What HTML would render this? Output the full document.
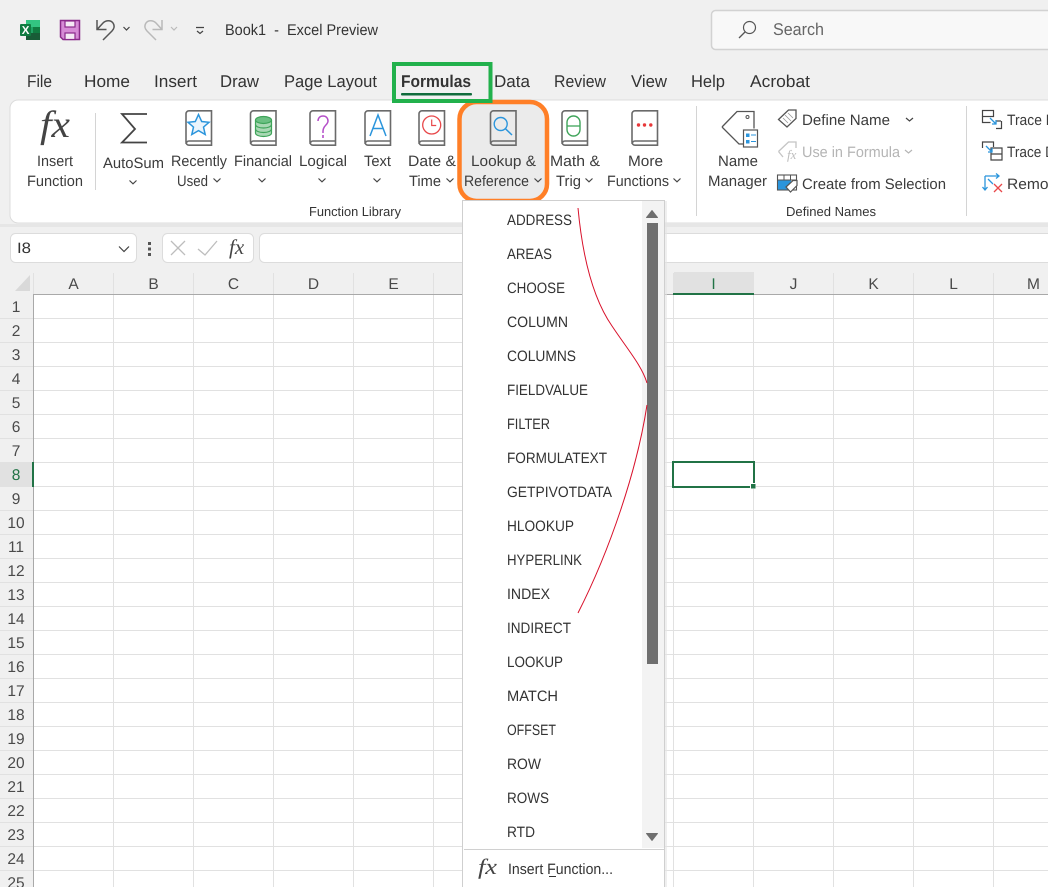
<!DOCTYPE html>
<html lang="en"><head><meta charset="utf-8"><title>Excel Preview</title>
<style>
html,body{margin:0;padding:0;background:#f0f0f0;width:1048px;height:887px;overflow:hidden}
svg{display:block}
text{font-family:"Liberation Sans",sans-serif;fill:#3a3a3a;font-size:15px;text-rendering:geometricPrecision}
.t{font-size:17px;fill:#333}
.m{font-size:15px;fill:#3c3c3c}
.g{font-size:13px;fill:#333}
.h{font-size:15.5px;fill:#4a4a4a;text-anchor:middle}
.i{font-size:15px;fill:#333}
.fx{font-family:"Liberation Serif",serif;font-style:italic;fill:#444}
.b{fill:none;stroke:#6a6a6a;stroke-width:1.6}
.c{fill:none;stroke:#444;stroke-width:1.2}
</style></head><body>
<svg width="1048" height="887" viewBox="0 0 1048 887" xmlns="http://www.w3.org/2000/svg">
<defs>
<symbol id="book" viewBox="0 0 28 36" width="28" height="36">
<path class="b" d="M4 .8h22.500v34.400H4a3 3 0 0 1-3-3V3.800a3 3 0 0 1 3-3zM1 34a3 3 0 0 1 3-3h22.500"/>
</symbol>
<path id="chev" class="c" d="M-3.500-1.500 0 1.800 3.500-1.500"/>
</defs>
<rect width="1048" height="887" fill="#f0f0f0"/>

<!-- title bar -->
<path d="M26 20h14v20H26z" fill="#185c37"/><path d="M26 20h14v7H26z" fill="#33c481"/><path d="M33 27h7v6h-7z" fill="#107c41"/><path d="M26 27h7v6h-7z" fill="#21a366"/>
<rect x="20" y="24" width="11" height="12" rx="1" fill="#107c41"/>
<text x="21.800" y="34" style="font-size:11.500px;font-weight:bold;fill:#fff">X</text>
<path d="M60.500 20.500h19v19H63l-2.500-2.500z" fill="#d68bd6" stroke="#8a2a8a" stroke-width="1.500"/>
<rect x="65" y="21" width="10" height="6" fill="#f5e9f5" stroke="#8a2a8a" stroke-width="1.200"/>
<rect x="65" y="33" width="10" height="6.500" fill="#f5e9f5" stroke="#8a2a8a" stroke-width="1.200"/>
<path d="M97 20v9.500h9.500M97.500 29L103 23c3-3 8-3 10 0c2 3 1 6-1 8l-9 9" fill="none" stroke="#555" stroke-width="1.500"/>
<path class="c" d="M123.500 27l3 3 3-3"/>
<path d="M162 20v9.500h-9.500M161.500 29L156 23c-3-3-8-3-10 0c-2 3-1 6 1 8l9 9" fill="none" stroke="#b9b9b9" stroke-width="1.500"/>
<path d="M171 27l3 3 3-3" fill="none" stroke="#bbb" stroke-width="1.200"/>
<path d="M196 27.500h8M197 31l3 2.500 3-2.500" fill="none" stroke="#444" stroke-width="1.200"/>
<text x="225" y="35" textLength="153" lengthAdjust="spacingAndGlyphs" style="font-size:15.500px;fill:#333" xml:space="preserve">Book1  -  Excel Preview</text>

<!-- search -->
<rect x="711.500" y="10.500" width="345" height="39" rx="4" fill="#f8f8f8" stroke="#d2d2d2" stroke-width="1.500"/>
<circle cx="749.500" cy="27.500" r="6" fill="none" stroke="#555" stroke-width="1.200"/>
<path d="M745 32l-6 6" stroke="#555" stroke-width="1.300"/>
<text x="773" y="35" textLength="51" lengthAdjust="spacingAndGlyphs" style="font-size:17px;fill:#666">Search</text>

<!-- tabs -->
<text class="t" x="27" y="87" textLength="25" lengthAdjust="spacingAndGlyphs">File</text>
<text class="t" x="84" y="87" textLength="46" lengthAdjust="spacingAndGlyphs">Home</text>
<text class="t" x="154" y="87" textLength="43" lengthAdjust="spacingAndGlyphs">Insert</text>
<text class="t" x="220" y="87" textLength="39" lengthAdjust="spacingAndGlyphs">Draw</text>
<text class="t" x="284" y="87" textLength="93" lengthAdjust="spacingAndGlyphs">Page Layout</text>
<text class="t" x="401" y="87" textLength="70" lengthAdjust="spacingAndGlyphs" style="font-weight:bold">Formulas</text>
<text class="t" x="494" y="87" textLength="36" lengthAdjust="spacingAndGlyphs">Data</text>
<text class="t" x="554" y="87" textLength="52" lengthAdjust="spacingAndGlyphs">Review</text>
<text class="t" x="631" y="87" textLength="36" lengthAdjust="spacingAndGlyphs">View</text>
<text class="t" x="691" y="87" textLength="34" lengthAdjust="spacingAndGlyphs">Help</text>
<text class="t" x="750" y="87" textLength="60" lengthAdjust="spacingAndGlyphs">Acrobat</text>

<!-- ribbon -->
<rect x="10" y="100" width="1060" height="123" rx="8" fill="#fff" stroke="#dcdcdc"/>
<rect x="0" y="224" width="1048" height="3" fill="#e6e6e6"/>
<rect x="95" y="113" width="1" height="77" fill="#d4d4d4"/>
<rect x="696" y="106" width="1" height="110" fill="#d4d4d4"/>
<rect x="966" y="106" width="1" height="110" fill="#d4d4d4"/>

<!-- formula bar -->
<rect x="10.500" y="233.500" width="126" height="29" rx="5" fill="#fff" stroke="#dcdcdc"/>
<text x="17" y="253" textLength="14" lengthAdjust="spacingAndGlyphs" style="font-size:15px;fill:#333">I8</text>
<path d="M119 246.500l5 5 5-5" fill="none" stroke="#444" stroke-width="1.200"/>
<rect x="148" y="242" width="3" height="3" fill="#555"/><rect x="148" y="247.500" width="3" height="3" fill="#555"/><rect x="148" y="253" width="3" height="3" fill="#555"/>
<rect x="162.500" y="233.500" width="91" height="29" rx="5" fill="#fff" stroke="#dcdcdc"/>
<path d="M171 241l14 14M185 241l-14 14" stroke="#bdbdbd" stroke-width="1.300" fill="none"/>
<path d="M198 249l7 6 12-14" stroke="#bdbdbd" stroke-width="1.300" fill="none"/>
<text class="fx" x="229" y="254" style="font-size:21px">fx</text>
<rect x="259.500" y="233.500" width="800" height="29" rx="5" fill="#fff" stroke="#dcdcdc"/>

<!-- sheet -->
<rect x="33" y="295" width="1015" height="592" fill="#fff"/>
<path d="M30 275v16h-15z" fill="#d9d9d9"/>
<g stroke="#e1e1e1" stroke-width="1">
<path d="M0 318.500H1048M0 342.500H1048M0 366.500H1048M0 390.500H1048M0 414.500H1048M0 438.500H1048M0 462.500H1048M0 486.500H1048M0 510.500H1048M0 534.500H1048M0 558.500H1048M0 582.500H1048M0 606.500H1048M0 630.500H1048M0 654.500H1048M0 678.500H1048M0 702.500H1048M0 726.500H1048M0 750.500H1048M0 774.500H1048M0 798.500H1048M0 822.500H1048M0 846.500H1048M0 870.500H1048"/>
<path d="M33.500 273V294M113.500 273V887M193.500 273V887M273.500 273V887M353.500 273V887M433.500 273V887M673.500 273V887M753.500 273V887M833.500 273V887M913.500 273V887M993.500 273V887"/>
</g>
<rect x="674" y="272" width="80" height="22" fill="#e1e1e1"/>
<rect x="0" y="463" width="33" height="23" fill="#e1e1e1"/>
<rect x="33" y="294" width="1015" height="1" fill="#a9a9a9"/>
<rect x="33" y="294" width="1" height="593" fill="#a9a9a9"/>
<rect x="673" y="293" width="81" height="2" fill="#217346"/>
<rect x="32" y="462" width="2" height="25" fill="#217346"/>

<text class="h" x="73.500" y="289">A</text><text class="h" x="153.500" y="289">B</text><text class="h" x="233.500" y="289">C</text><text class="h" x="313.500" y="289">D</text><text class="h" x="393.500" y="289">E</text><text class="h" x="713.500" y="289" style="fill:#217346">I</text><text class="h" x="793.500" y="289">J</text><text class="h" x="873.500" y="289">K</text><text class="h" x="953.500" y="289">L</text><text class="h" x="1033.500" y="289">M</text>
<text class="h" x="16" y="312">1</text><text class="h" x="16" y="336">2</text><text class="h" x="16" y="360">3</text><text class="h" x="16" y="384">4</text><text class="h" x="16" y="408">5</text><text class="h" x="16" y="432">6</text><text class="h" x="16" y="456">7</text><text class="h" x="16" y="480" style="fill:#217346">8</text><text class="h" x="16" y="504">9</text><text class="h" x="16" y="528">10</text><text class="h" x="16" y="552">11</text><text class="h" x="16" y="576">12</text><text class="h" x="16" y="600">13</text><text class="h" x="16" y="624">14</text><text class="h" x="16" y="648">15</text><text class="h" x="16" y="672">16</text><text class="h" x="16" y="696">17</text><text class="h" x="16" y="720">18</text><text class="h" x="16" y="744">19</text><text class="h" x="16" y="768">20</text><text class="h" x="16" y="792">21</text><text class="h" x="16" y="816">22</text><text class="h" x="16" y="840">23</text><text class="h" x="16" y="864">24</text><text class="h" x="16" y="888">25</text>

<rect x="673" y="462" width="81" height="25" fill="none" stroke="#217346" stroke-width="2"/>
<rect x="750" y="483" width="6" height="6" fill="#fff"/><rect x="751" y="484" width="4.500" height="4.500" fill="#217346"/>

<!-- ribbon content -->
<text class="fx" x="40" y="137" style="font-size:38px" textLength="30" lengthAdjust="spacingAndGlyphs">fx</text>
<text class="m" x="37" y="166" textLength="36" lengthAdjust="spacingAndGlyphs">Insert</text>
<text class="m" x="27" y="186" textLength="56" lengthAdjust="spacingAndGlyphs">Function</text>

<path d="M147 114h-25l13 15-13 13.500h25" fill="none" stroke="#444" stroke-width="1.800"/>
<text class="m" x="103" y="168" textLength="61" lengthAdjust="spacingAndGlyphs">AutoSum</text>
<use href="#chev" x="133" y="182"/>

<use href="#book" x="185" y="110"/>
<path d="M198.500 114.500l3.200 7 7.300.8-5.500 4.800 1.700 7.400-6.700-3.900-6.700 3.900 1.700-7.400-5.500-4.800 7.300-.8z" fill="#eaf4fc" stroke="#2b95dc" stroke-width="1.500"/>
<text class="m" x="171" y="166" textLength="56" lengthAdjust="spacingAndGlyphs">Recently</text>
<text class="m" x="177" y="186" textLength="31" lengthAdjust="spacingAndGlyphs">Used</text>
<use href="#chev" x="217" y="180"/>

<use href="#book" x="249.500" y="110"/>
<g transform="translate(1 1)" fill="#a9d8b4" stroke="#3fa45a" stroke-width="1.200"><path d="M254.500 119v13c0 2 3.500 3.500 8 3.500s8-1.500 8-3.500v-13"/><ellipse cx="262.500" cy="119" rx="8" ry="3.500" fill="#6cc083"/><path d="M254.500 123.500c0 2 3.500 3.500 8 3.500s8-1.500 8-3.500M254.500 128c0 2 3.500 3.500 8 3.500s8-1.500 8-3.500" fill="none"/></g>
<text class="m" x="234" y="166" textLength="58" lengthAdjust="spacingAndGlyphs">Financial</text>
<use href="#chev" x="262" y="180"/>

<use href="#book" x="309" y="110"/>
<path d="M318 121c0-3 2-5 5-5s5 2 5 5c0 4-5 4.500-5 10v2" fill="none" stroke="#b44fc8" stroke-width="1.500"/><path d="M323 135v3" stroke="#b44fc8" stroke-width="1.600"/>
<text class="m" x="299" y="166" textLength="48" lengthAdjust="spacingAndGlyphs">Logical</text>
<use href="#chev" x="322" y="180"/>

<use href="#book" x="364" y="110"/>
<path d="M370 136l8-21 8 21M372.800 128.500h10.400" fill="none" stroke="#2b95dc" stroke-width="1.500"/>
<text class="m" x="364" y="166" textLength="27" lengthAdjust="spacingAndGlyphs">Text</text>
<use href="#chev" x="377" y="180"/>

<use href="#book" x="418" y="110"/>
<circle cx="431.700" cy="125" r="9" fill="none" stroke="#e8484a" stroke-width="1.300"/><path d="M431.700 119.500v6h4.500" fill="none" stroke="#e8484a" stroke-width="1.200"/>
<text class="m" x="408" y="166" textLength="48" lengthAdjust="spacingAndGlyphs">Date &amp;</text>
<text class="m" x="409" y="186" textLength="32" lengthAdjust="spacingAndGlyphs">Time</text>
<use href="#chev" x="450" y="180"/>

<!-- lookup highlight -->
<rect x="459.500" y="102" width="87.500" height="99" rx="17" fill="#ebebeb" stroke="#ff7f27" stroke-width="4.500"/>
<use href="#book" x="489.500" y="110"/>
<circle cx="500.700" cy="124" r="6.500" fill="none" stroke="#2b95dc" stroke-width="1.400"/><path d="M505.500 128.800l6.500 6.200" stroke="#2b95dc" stroke-width="1.500"/>
<text class="m" x="471" y="166" textLength="65" lengthAdjust="spacingAndGlyphs">Lookup &amp;</text>
<text class="m" x="464" y="186" textLength="65" lengthAdjust="spacingAndGlyphs">Reference</text>
<use href="#chev" x="538" y="180"/>

<use href="#book" x="561" y="110"/>
<rect x="567" y="116" width="13" height="20" rx="6.500" fill="none" stroke="#3fa45a" stroke-width="1.400"/><path d="M567 126h13" stroke="#3fa45a" stroke-width="1.300"/>
<text class="m" x="550" y="166" textLength="50" lengthAdjust="spacingAndGlyphs">Math &amp;</text>
<text class="m" x="556" y="186" textLength="25" lengthAdjust="spacingAndGlyphs">Trig</text>
<use href="#chev" x="589" y="180"/>

<use href="#book" x="631" y="110"/>
<g fill="#e8383a"><circle cx="638.500" cy="125" r="1.700"/><circle cx="644.500" cy="125" r="1.700"/><circle cx="650.800" cy="125" r="1.700"/></g>
<text class="m" x="628" y="166" textLength="35" lengthAdjust="spacingAndGlyphs">More</text>
<text class="m" x="607" y="186" textLength="62" lengthAdjust="spacingAndGlyphs">Functions</text>
<use href="#chev" x="677" y="180"/>

<text class="g" x="309" y="216" textLength="92" lengthAdjust="spacingAndGlyphs">Function Library</text>
<text class="g" x="786" y="216" textLength="90" lengthAdjust="spacingAndGlyphs">Defined Names</text>

<!-- defined names -->
<path d="M722 127l15-15.500h17v17M722 127l17 17h4" fill="none" stroke="#555" stroke-width="1.300"/><circle cx="747.500" cy="117" r="1.500" fill="none" stroke="#555"/>
<rect x="743.500" y="130" width="14" height="17" fill="#fff" stroke="#555" stroke-width="1.200"/>
<rect x="746" y="133.500" width="3.500" height="3.500" fill="#2b95dc"/><rect x="746" y="140" width="3.500" height="3.500" fill="#2b95dc"/><path d="M751 135h5M751 141.500h5" stroke="#2b95dc"/>
<text class="m" x="718" y="166" textLength="40" lengthAdjust="spacingAndGlyphs">Name</text>
<text class="m" x="708" y="186" textLength="59" lengthAdjust="spacingAndGlyphs">Manager</text>

<path d="M778.500 119.500l10-9.500h7.500v8.500l-9 8.500z" fill="none" stroke="#555" stroke-width="1.300"/><path d="M785 115l6 6M783 118l5 5M788 113l5 5" stroke="#999" stroke-width=".8"/>
<text class="m" x="802" y="125" textLength="88" lengthAdjust="spacingAndGlyphs">Define Name</text>
<path class="c" d="M906 118l3.500 3 3.500-3"/>
<path d="M778.500 151.500l10-9.500h7.500v6M783 157l-4.500-5.500" fill="none" stroke="#c4c4c4" stroke-width="1.300"/>
<text class="fx" x="787" y="159" style="font-size:13px;fill:#bdbdbd">fx</text>
<text class="m" x="802" y="157" textLength="98" lengthAdjust="spacingAndGlyphs" style="fill:#b5b5b5">Use in Formula</text>
<path d="M905 150l3.500 3 3.500-3" fill="none" stroke="#b5b5b5" stroke-width="1.200"/>
<rect x="777.500" y="175" width="19" height="15" fill="#fff" stroke="#555" stroke-width="1.100"/><path d="M777.500 180h19M784 175v5M790.500 175v5" stroke="#555"/><path d="M778 180.500h13v9h-13z" fill="#2b95dc"/>
<path d="M786 187l7-6.500h4v5l-6.500 6.500z" fill="#fff" stroke="#555" stroke-width="1.200"/>
<text class="m" x="802" y="189" textLength="144" lengthAdjust="spacingAndGlyphs">Create from Selection</text>

<!-- trace -->
<rect x="982.500" y="110.500" width="11" height="6" fill="none" stroke="#444" stroke-width="1.200"/><path d="M982.500 116.500v6h8M1001 121h-5M996 128.500h5.500V121" fill="none" stroke="#444" stroke-width="1.200"/><path d="M990 118l6 6M996 120v4h-4" fill="none" stroke="#2b95dc" stroke-width="1.300"/>
<text class="m" x="1007" y="125" textLength="48" lengthAdjust="spacingAndGlyphs">Trace P</text>
<path d="M982.500 148v-6h11v5M991 160h11v-6h-11zM991 154v-6h11v6" fill="none" stroke="#444" stroke-width="1.200"/><path d="M986 146l6 6M992 148v4h-4" fill="none" stroke="#2b95dc" stroke-width="1.300"/>
<text class="m" x="1007" y="157" textLength="48" lengthAdjust="spacingAndGlyphs">Trace D</text>
<path d="M985 176v14M982.500 187l2.500 3 2.500-3M985 176h14M996 173.500l3 2.500-3 2.500M988 179l5 5" fill="none" stroke="#2b95dc" stroke-width="1.300"/><path d="M994 184l8 8M1002 184l-8 8" stroke="#e8484a" stroke-width="1.300"/>
<text class="m" x="1007" y="189" textLength="58" lengthAdjust="spacingAndGlyphs">Remove</text>

<!-- dropdown -->
<rect x="665" y="201" width="2" height="686" fill="#e4e4e4" opacity=".6"/>
<rect x="462.500" y="200.500" width="202" height="700" fill="#fff" stroke="#cfcfcf"/>
<rect x="642" y="201" width="22" height="647" fill="#f3f3f3"/>
<rect x="647" y="223" width="11" height="441" fill="#6f6f6f"/>
<path d="M646.500 217.500l5.500-7 5.500 7z" fill="#6f6f6f" stroke="#6f6f6f" stroke-linejoin="round"/>
<path d="M646.500 833.500l5.500 7 5.500-7z" fill="#6f6f6f" stroke="#6f6f6f" stroke-linejoin="round"/>
<rect x="464" y="849" width="200" height="1" fill="#d0d0d0"/>

<text class="i" x="507" y="225" textLength="65" lengthAdjust="spacingAndGlyphs">ADDRESS</text>
<text class="i" x="507" y="259" textLength="45" lengthAdjust="spacingAndGlyphs">AREAS</text>
<text class="i" x="507" y="293" textLength="58" lengthAdjust="spacingAndGlyphs">CHOOSE</text>
<text class="i" x="507" y="327" textLength="61" lengthAdjust="spacingAndGlyphs">COLUMN</text>
<text class="i" x="507" y="361" textLength="69" lengthAdjust="spacingAndGlyphs">COLUMNS</text>
<text class="i" x="507" y="395" textLength="81" lengthAdjust="spacingAndGlyphs">FIELDVALUE</text>
<text class="i" x="507" y="429" textLength="43" lengthAdjust="spacingAndGlyphs">FILTER</text>
<text class="i" x="507" y="463" textLength="100" lengthAdjust="spacingAndGlyphs">FORMULATEXT</text>
<text class="i" x="507" y="497" textLength="105" lengthAdjust="spacingAndGlyphs">GETPIVOTDATA</text>
<text class="i" x="507" y="531" textLength="67" lengthAdjust="spacingAndGlyphs">HLOOKUP</text>
<text class="i" x="507" y="565" textLength="75" lengthAdjust="spacingAndGlyphs">HYPERLINK</text>
<text class="i" x="507" y="599" textLength="43" lengthAdjust="spacingAndGlyphs">INDEX</text>
<text class="i" x="507" y="633" textLength="64" lengthAdjust="spacingAndGlyphs">INDIRECT</text>
<text class="i" x="507" y="667" textLength="56" lengthAdjust="spacingAndGlyphs">LOOKUP</text>
<text class="i" x="507" y="701" textLength="51" lengthAdjust="spacingAndGlyphs">MATCH</text>
<text class="i" x="507" y="735" textLength="49" lengthAdjust="spacingAndGlyphs">OFFSET</text>
<text class="i" x="507" y="769" textLength="34" lengthAdjust="spacingAndGlyphs">ROW</text>
<text class="i" x="507" y="803" textLength="42" lengthAdjust="spacingAndGlyphs">ROWS</text>
<text class="i" x="507" y="837" textLength="28" lengthAdjust="spacingAndGlyphs">RTD</text>
<text class="fx" x="478" y="874" style="font-size:22px" textLength="19" lengthAdjust="spacingAndGlyphs">fx</text>
<text class="i" x="508" y="874" textLength="105" lengthAdjust="spacingAndGlyphs">Insert Function...</text>
<rect x="549" y="876" width="7" height="1" fill="#333"/>

<!-- red curve -->
<path d="M578 208C583 262 594 300 612 326C628 350 642 366 647 383M647 405C637 470 610 550 578 613" fill="none" stroke="#d8102a" stroke-width="1"/>

<!-- green tab highlight -->
<rect x="394" y="64" width="96.500" height="37" fill="none" stroke="#22b14c" stroke-width="4"/>
<rect x="401" y="93" width="71" height="2.500" rx="1" fill="#106b3c"/>
</svg>
</body></html>
